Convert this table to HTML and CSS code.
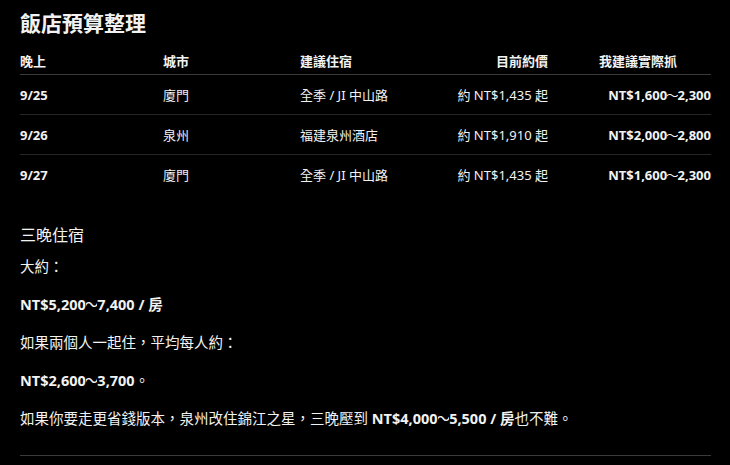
FILE: index.html
```html
<!DOCTYPE html>
<html lang="zh-Hant">
<head>
<meta charset="utf-8">
<link rel="stylesheet" href="styles.css">
</head>
<body>
<main class="doc">
  <h2 class="title">飯店預算整理</h2>
  <div class="table">
    <div class="row head">
      <div class="c1">晚上</div>
      <div class="c2">城市</div>
      <div class="c3">建議住宿</div>
      <div class="c4">目前約價</div>
      <div class="c5">我建議實際抓</div>
    </div>
    <div class="row">
      <div class="c1 b">9/25</div>
      <div class="c2">廈門</div>
      <div class="c3">全季 / JI 中山路</div>
      <div class="c4">約 NT$1,435 起</div>
      <div class="c5 b">NT$1,600<span class="t">～</span>2,300</div>
    </div>
    <div class="row">
      <div class="c1 b">9/26</div>
      <div class="c2">泉州</div>
      <div class="c3">福建泉州酒店</div>
      <div class="c4">約 NT$1,910 起</div>
      <div class="c5 b">NT$2,000<span class="t">～</span>2,800</div>
    </div>
    <div class="row last">
      <div class="c1 b">9/27</div>
      <div class="c2">廈門</div>
      <div class="c3">全季 / JI 中山路</div>
      <div class="c4">約 NT$1,435 起</div>
      <div class="c5 b">NT$1,600<span class="t">～</span>2,300</div>
    </div>
  </div>
  <h3 class="sub">三晚住宿</h3>
  <p class="p">大約：</p>
  <p class="p"><strong>NT$5,200<span class="t">～</span>7,400 / 房</strong></p>
  <p class="p">如果兩個人一起住，平均每人約：</p>
  <p class="p"><strong>NT$2,600<span class="t">～</span>3,700</strong>。</p>
  <p class="p">如果你要走更省錢版本，泉州改住錦江之星，三晚壓到 <strong>NT$4,000<span class="t">～</span>5,500 / 房</strong>也不難。</p>
  <hr class="rule">
</main>
</body>
</html>
```

FILE: styles.css
```css
html, body {
  margin: 0;
  padding: 0;
  background: #000;
}
body {
  color: #f2f2f2;
  font-family: "Noto Sans", "Noto Sans CJK TC", sans-serif;
}
.doc {
  width: 691px;
  padding: 0 0 0 20px;
}
.title {
  margin: 0;
  padding-top: 9px;
  font-size: 21px;
  line-height: 28px;
  font-weight: 700;
}
.table {
  font-size: 13px;
}
.row {
  display: grid;
  grid-template-columns: 143px 137px 148px 100px 163px;
  line-height: 20px;
  padding: 10px 0 9px;
  border-bottom: 1px solid #262626;
}
.row.head {
  padding: 14px 0 3px;
  font-weight: 700;
  border-bottom: 1px solid #3a3a3a;
}
.row.last {
  border-bottom: none;
}
.b {
  font-weight: 700;
}
.c4 {
  text-align: right;
}
.c5 {
  text-align: right;
}
.head .c5 {
  text-align: left;
  padding-left: 51px;
}
.t {
  display: inline-block;
  width: 0.8em;
  overflow: hidden;
  text-align: center;
  font-weight: 400;
  vertical-align: top;
  white-space: nowrap;
  text-indent: -0.1em;
}
.sub {
  margin: 30px 0 0;
  font-size: 16px;
  line-height: 22px;
  font-weight: 400;
}
.p {
  margin: 9px 0 0;
  font-size: 14.5px;
  line-height: 22px;
}
.p + .p {
  margin-top: 16px;
}
.p strong {
  font-weight: 700;
}
.rule {
  margin: 26px 0 0;
  border: none;
  border-top: 1px solid #3a3a3a;
  height: 0;
}
```
